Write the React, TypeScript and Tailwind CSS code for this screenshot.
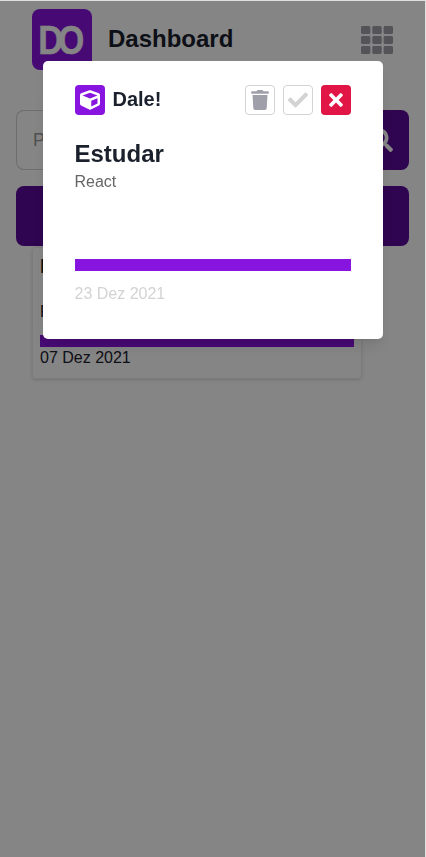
import React from "react";
import { FaCheck, FaCube, FaSearch, FaTh, FaTimes, FaTrash } from "react-icons/fa";

function Logo() {
  return (
    <svg className="h-[61px] w-[60px] shrink-0 rounded-lg bg-[#8814e0]" viewBox="0 0 60 61">
      <g fill="#fff" stroke="#fff" strokeWidth="0.5" className="font-['Liberation_Sans',sans-serif] text-[40px] font-bold">
        <text x="6.2" y="45" textLength="25" lengthAdjust="spacingAndGlyphs">D</text>
        <text x="26.2" y="45" textLength="26" lengthAdjust="spacingAndGlyphs">O</text>
      </g>
    </svg>
  );
}

function TaskModal() {
  return (
    <div className="fixed top-px right-px bottom-0 left-0 bg-black/[0.48] pt-[60px] pl-[42.5px]">
      <section className="h-[278px] w-[340px] rounded-[5px] bg-white px-8 pt-6 shadow-[0_10px_15px_-3px_rgba(0,0,0,0.1),0_4px_6px_-2px_rgba(0,0,0,0.05)]">
        <header className="flex h-[30px] items-center gap-2">
          <div className="flex size-[30px] items-center justify-center rounded bg-[#8814e0] text-white">
            <FaCube size={20} />
          </div>
          <h2 className="flex-1 pb-0.5 text-xl leading-7 font-bold">Dale!</h2>
          <button className="flex size-[30px] items-center justify-center rounded border border-[#d3d3d3] text-[#9f9faa]">
            <FaTrash size={20} />
          </button>
          <button className="flex size-[30px] items-center justify-center rounded border border-[#d3d3d3] text-[#d3d3d3]">
            <FaCheck size={20} />
          </button>
          <button className="flex size-[30px] items-center justify-center rounded bg-[#e11546] text-white">
            <FaTimes size={20} />
          </button>
        </header>
        <h3 className="mt-[21px] text-2xl leading-9 font-bold">Estudar</h3>
        <p className="-mt-0.5 leading-6 text-[#666]">React</p>
        <div className="mt-[65px] h-3 bg-[#8814e0]" />
        <p className="mt-[11px] leading-6 text-[#d3d3d3]">23 Dez 2021</p>
      </section>
    </div>
  );
}

export default function App() {
  return (
    <div className="h-[857px] overflow-hidden border-t border-r border-[#dfe1e0] bg-white font-['Liberation_Sans',Arial,sans-serif] text-base text-[#1a202c]">
      <header className="flex items-center gap-4 px-8 pt-2">
        <Logo />
        <h1 className="flex-1 pb-0.5 text-2xl font-bold">Dashboard</h1>
        <FaTh size={32} className="text-[#9f9faa]" />
      </header>
      <main className="px-4 pt-10">
        <div className="flex h-[60px]">
          <div className="flex flex-1 items-center rounded-l-lg border border-r-0 border-[#d3d3d3] px-4 text-lg text-[#999]">
            Pesquisar
          </div>
          <button className="flex w-14 items-center justify-center rounded-r-lg bg-[#5b0899] text-white">
            <FaSearch size={24} />
          </button>
        </div>
        <button className="mt-4 block h-[60px] w-full rounded-lg bg-[#5b0899]" />
        <article className="mt-px ml-4 h-[132px] w-[330px] rounded-sm border border-[#eee] px-[7px] pt-[3px] shadow-[0_1px_3px_rgba(0,0,0,0.15)]">
          <h3 className="text-xl leading-[30px] font-bold">Estudar</h3>
          <p className="mt-[19px] leading-6">React</p>
          <div className="mt-[11px] h-3 bg-[#8814e0]" />
          <p className="leading-[22px]">07 Dez 2021</p>
        </article>
      </main>
      <TaskModal />
    </div>
  );
}
